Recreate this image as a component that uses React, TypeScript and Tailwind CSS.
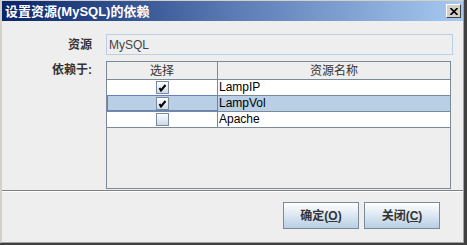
import { ReactNode } from "react"

const font = "font-['Liberation_Sans','Noto_Sans_CJK_SC',sans-serif]"

function CheckBox({ checked }: { checked: boolean }) {
    return (
        <svg width="13" height="13" viewBox="0 0 13 13">
            <defs>
                <linearGradient id="cbg" x1="0" y1="0" x2="0" y2="1">
                    <stop offset="0" stopColor="#ffffff" />
                    <stop offset="1" stopColor="#c9d8e8" />
                </linearGradient>
            </defs>
            <rect x="0.5" y="0.5" width="12" height="12" fill="url(#cbg)" stroke="#7a8a99" />
            {checked && <path d="M3.5 7 L5 9.5 L9.5 4" fill="none" stroke="#000" strokeWidth="2" />}
        </svg>
    )
}

function Button({ label, mn }: { label: string; mn: string }) {
    return (
        <button className="w-[76px] h-[27px] border border-[#7a8a99] bg-gradient-to-b from-[#ffffff] to-[#b8cfe5] text-[12px] font-bold text-[#333] flex items-center justify-center">
            {label}(<span className="underline">{mn}</span>)
        </button>
    )
}

const rows = [
    { checked: true, name: "LampIP", selected: false },
    { checked: true, name: "LampVol", selected: true },
    { checked: false, name: "Apache", selected: false },
]

function Row({ children, selected }: { children: ReactNode; selected: boolean }) {
    return <div className={`flex h-[16px] border-b border-[#7a8a99] ${selected ? "bg-[#b8cfe5]" : "bg-white"}`}>{children}</div>
}

export default function App() {
    return (
        <div className={`w-[467px] h-[245px] bg-[#404040] pr-[3px] pb-[2px] ${font}`}>
            <div className="h-full flex flex-col bg-[#eeeeee] border-l-2 border-t border-l-[#d4d0c8] border-t-[#d4d0c8] border-r border-b border-r-[#a0a0a0] border-b-[#a0a0a0]">
                <div className="h-[20px] flex items-center justify-between pl-[3px] pr-[2px] bg-gradient-to-r from-[#0a246a] via-[#5b7bb4] to-[#a6caf0]">
                    <span className="text-white text-[13px] font-bold leading-none pt-[1px]">设置资源(MySQL)的依赖</span>
                    <div className="w-[15px] h-[14px] bg-[#d4d0c8] border border-t-white border-l-white border-r-[#404040] border-b-[#404040] flex items-center justify-center">
                        <svg width="8" height="7" viewBox="0 0 8 7">
                            <path d="M0.5 0 L7.5 7 M7.5 0 L0.5 7" stroke="#000" strokeWidth="1.6" />
                        </svg>
                    </div>
                </div>

                <div className="flex items-center mt-[13px] h-[21px]">
                    <span className="w-[104px] pl-[66px] text-[12px] font-bold text-[#333]">资源</span>
                    <div className="w-[347px] h-[21px] border border-[#b8cfe5] flex items-center pl-[2px] text-[12px] text-[#444]">MySQL</div>
                </div>

                <div className="flex mt-[6px]">
                    <span className="w-[104px] pl-[50px] pt-[2px] text-[12px] font-bold text-[#333] leading-[14px]">依赖于:</span>
                    <div className="w-[345px] h-[128px] border border-[#7a8a99] flex flex-col">
                        <div className="flex h-[18px] border-b border-[#7a8a99] text-[12px] text-[#333]">
                            <div className="w-[111px] border-r border-[#7a8a99] flex items-center justify-center">选择</div>
                            <div className="flex-1 flex items-center justify-center">资源名称</div>
                        </div>
                        {rows.map((r) => (
                            <Row key={r.name} selected={r.selected}>
                                <div className={`w-[111px] border-r flex items-center justify-center ${r.selected ? "border border-[#6382bf] -mt-px h-[16px]" : "border-[#7a8a99]"}`}>
                                    <CheckBox checked={r.checked} />
                                </div>
                                <div className="flex-1 pl-[1px] text-[12px] text-black leading-[15px]">{r.name}</div>
                            </Row>
                        ))}
                    </div>
                </div>

                <div className="mt-[1px] border-t border-b border-t-[#808080] border-b-white" />

                <div className="flex justify-end gap-[5px] pr-[23px] mt-[10px]">
                    <Button label="确定" mn="O" />
                    <Button label="关闭" mn="C" />
                </div>
            </div>
        </div>
    )
}
